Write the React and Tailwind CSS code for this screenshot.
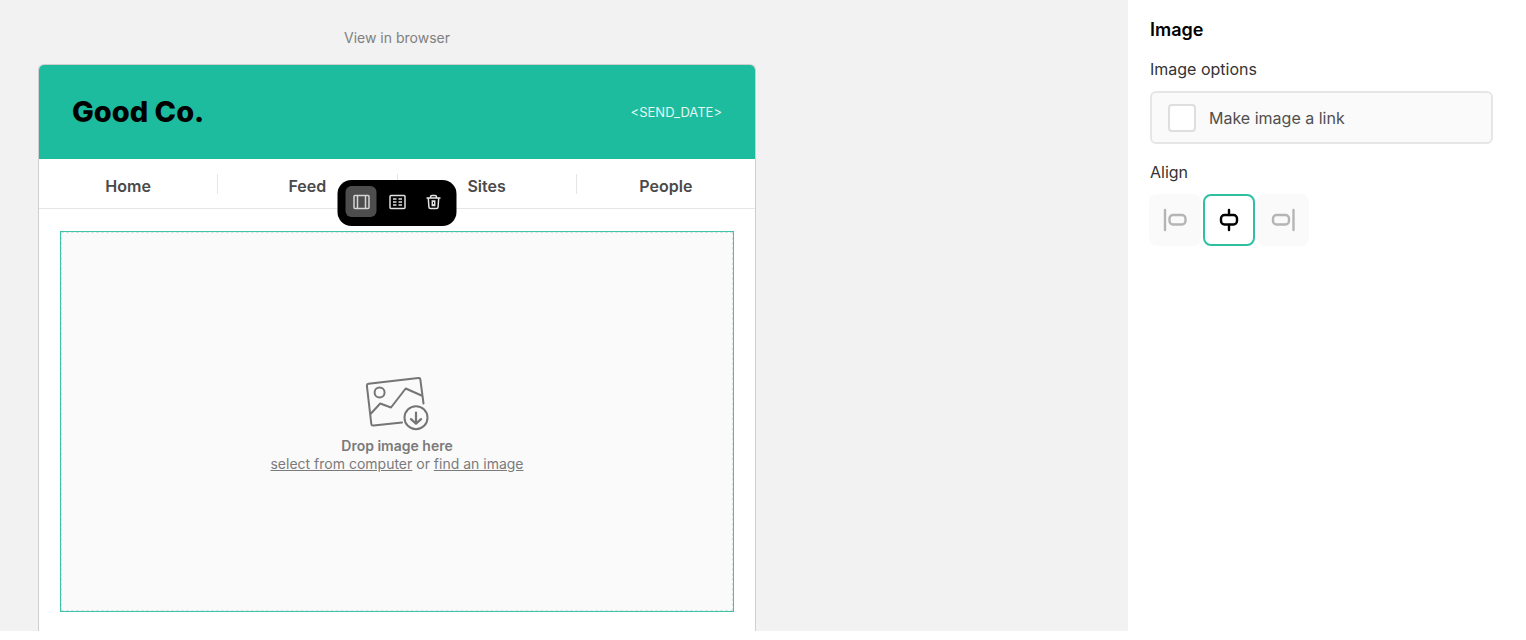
import React, { useState } from 'react';

const navLinks = ['Home', 'Feed', 'Sites', 'People'];

function ColumnsIcon() {
  return (
    <svg width="18" height="16" viewBox="0 0 18 16" fill="none" stroke="#d4d4d4" strokeWidth="1.5">
      <rect x="1.5" y="1.5" width="15" height="13" rx="1" />
      <path d="M5 1.5V14.5M13 1.5V14.5" />
    </svg>
  );
}

function GridIcon() {
  return (
    <svg width="18" height="16" viewBox="0 0 18 16" fill="none" stroke="#e0e0e0">
      <rect x="1.5" y="1.5" width="15" height="13" rx="1" strokeWidth="1.5" />
      <path d="M4.5 5H8M10 5H13.5M4.5 8H8M10 8H13.5M4.5 11H8M10 11H13.5" strokeWidth="1.6" />
    </svg>
  );
}

function TrashIcon() {
  return (
    <svg width="16" height="16" viewBox="0 0 16 16" fill="none" stroke="#e6e6e6" strokeWidth="1.5">
      <path d="M1 4H15M5 4V3Q5 1.5 6.5 1.5H9.5Q11 1.5 11 3V4" />
      <path d="M2.8 4L3.4 13Q3.5 14.5 5 14.5H11Q12.5 14.5 12.6 13L13.2 4" />
      <rect x="6.8" y="7" width="2.4" height="4.5" strokeWidth="1.5" />
    </svg>
  );
}

function DropImageIcon() {
  return (
    <svg width="64" height="54" viewBox="0 0 64 54" fill="none" stroke="#757575" strokeWidth="2" strokeLinecap="round" strokeLinejoin="round">
      <path d="M58.5 26.5L55.3 2.2Q55 0.8 53.2 1L3.5 6.7Q1.7 7 1.9 8.8L6.3 46.8Q6.6 48.8 8.6 48.5L37 45.4" />
      <circle cx="14.6" cy="15.6" r="5" />
      <path d="M6 36.5L15.2 26.5L26 30.5L40.7 11.5L56.5 18.5" />
      <circle cx="51" cy="40.7" r="11.5" />
      <path d="M51 35.5V46.3M46 42.1L51 46.6L56 42.1" strokeWidth="2.2" />
    </svg>
  );
}

function AlignIcon({ type }) {
  return (
    <svg width="24" height="24" viewBox="0 0 24 24" fill="none" stroke="currentColor" strokeWidth="2.4" strokeLinecap="round">
      {type === 'left' && <path d="M2 2V22" />}
      {type === 'right' && <path d="M22.5 2V22" />}
      {type === 'center' && <path d="M12 2V7M12 17V22" />}
      {type === 'left' && <rect x="6.5" y="7" width="16" height="9.5" rx="3.5" />}
      {type === 'right' && <rect x="2" y="7" width="16" height="9.5" rx="3.5" />}
      {type === 'center' && <rect x="4" y="7" width="16" height="9.5" rx="3.5" />}
    </svg>
  );
}

function BlockToolbar() {
  return (
    <div className="absolute bottom-full left-1/2 mb-1.5 flex -translate-x-1/2 gap-[5px] rounded-[14px] bg-black px-2 pt-1.5 pb-[9px]">
      <button type="button" aria-label="Layout" className="flex h-[31px] w-[31px] items-center justify-center rounded-md bg-[#4d4d4d]">
        <ColumnsIcon />
      </button>
      <button type="button" aria-label="Grid" className="flex h-[31px] w-[31px] items-center justify-center rounded-md">
        <GridIcon />
      </button>
      <button type="button" aria-label="Delete" className="flex h-[31px] w-[31px] items-center justify-center rounded-md">
        <TrashIcon />
      </button>
    </div>
  );
}

function EmailPreview() {
  return (
    <div className="w-full max-w-[718px] rounded-t-md border border-b-0 border-[#cfcfcf] bg-white">
      {/* Brand header */}
      <header className="flex h-[94px] items-center justify-between rounded-t-[5px] bg-[#1dbc9e] px-[33px]">
        <span className="text-[29px] leading-9 font-extrabold text-black">Good Co.</span>
        <span className="text-[13px] leading-5 text-[#e4f7f3]">&lt;SEND_DATE&gt;</span>
      </header>

      {/* Navigation */}
      <nav className="flex h-[50px] items-center border-b border-[#e6e6e6]">
        {navLinks.map((link) => (
          <a key={link} href="#" className="flex h-5 flex-1 items-center justify-center border-r border-[#e6e6e6] pt-1 text-base font-semibold text-[#4a4a4a] last:border-r-0">
            {link}
          </a>
        ))}
      </nav>

      {/* Image drop zone */}
      <div className="px-[21px] pt-[22px] pb-[19px]">
        <div className="relative border border-[#3fc4a9] bg-[#fafafa]">
          <BlockToolbar />
          <div className="flex h-[379px] flex-col items-center justify-center gap-1.5 border border-dashed border-[#d5e5e1] pt-1.5 text-[#7a7a7a]">
            <DropImageIcon />
            <div className="text-center text-sm leading-[18px]">
              <p className="font-semibold">Drop image here</p>
              <p>
                <a href="#" className="underline">select from computer</a> or <a href="#" className="underline">find an image</a>
              </p>
            </div>
          </div>
        </div>
      </div>
    </div>
  );
}

function ImagePanel() {
  const [align, setAlign] = useState('center');

  return (
    <aside className="w-[398px] shrink-0 bg-white pt-[18px] pr-[33px] pl-[22px]">
      <h2 className="text-lg leading-6 font-semibold text-black">Image</h2>
      <h3 className="mt-[15px] text-base text-[#333]">Image options</h3>
      <label className="mt-[10px] flex h-[53px] items-center gap-[13px] rounded-md border-2 border-[#e6e6e6] bg-[#fafafa] px-4 text-base text-[#4f4f4f]">
        <input type="checkbox" className="h-7 w-7 appearance-none rounded border-2 border-[#dedede] bg-white checked:bg-[#1dbc9e]" />
        Make image a link
      </label>

      <h3 className="mt-4 text-base text-[#333]">Align</h3>
      <div className="mt-[10px] -ml-px flex gap-0.5">
        {['left', 'center', 'right'].map((type) => (
          <button
            key={type}
            type="button"
            aria-label={`Align ${type}`}
            aria-pressed={align === type}
            onClick={() => setAlign(type)}
            className={
              align === type
                ? 'flex h-[52px] w-[52px] items-center justify-center rounded-lg border-2 border-[#2fc0a4] bg-white text-black'
                : 'flex h-[52px] w-[52px] items-center justify-center rounded-lg bg-[#fafafa] text-[#b5b5b5]'
            }
          >
            <AlignIcon type={type} />
          </button>
        ))}
      </div>
    </aside>
  );
}

export default function App() {
  return (
    <div className="flex bg-white font-['Inter',sans-serif]">
      <main className="min-w-0 flex-1 bg-[#f2f2f2] pt-[27px] pl-[38px]">
        <div className="mb-4 flex max-w-[718px] justify-center">
          <a href="#" className="text-sm leading-[21px] text-[#808080]">View in browser</a>
        </div>
        <EmailPreview />
      </main>
      <ImagePanel />
    </div>
  );
}
